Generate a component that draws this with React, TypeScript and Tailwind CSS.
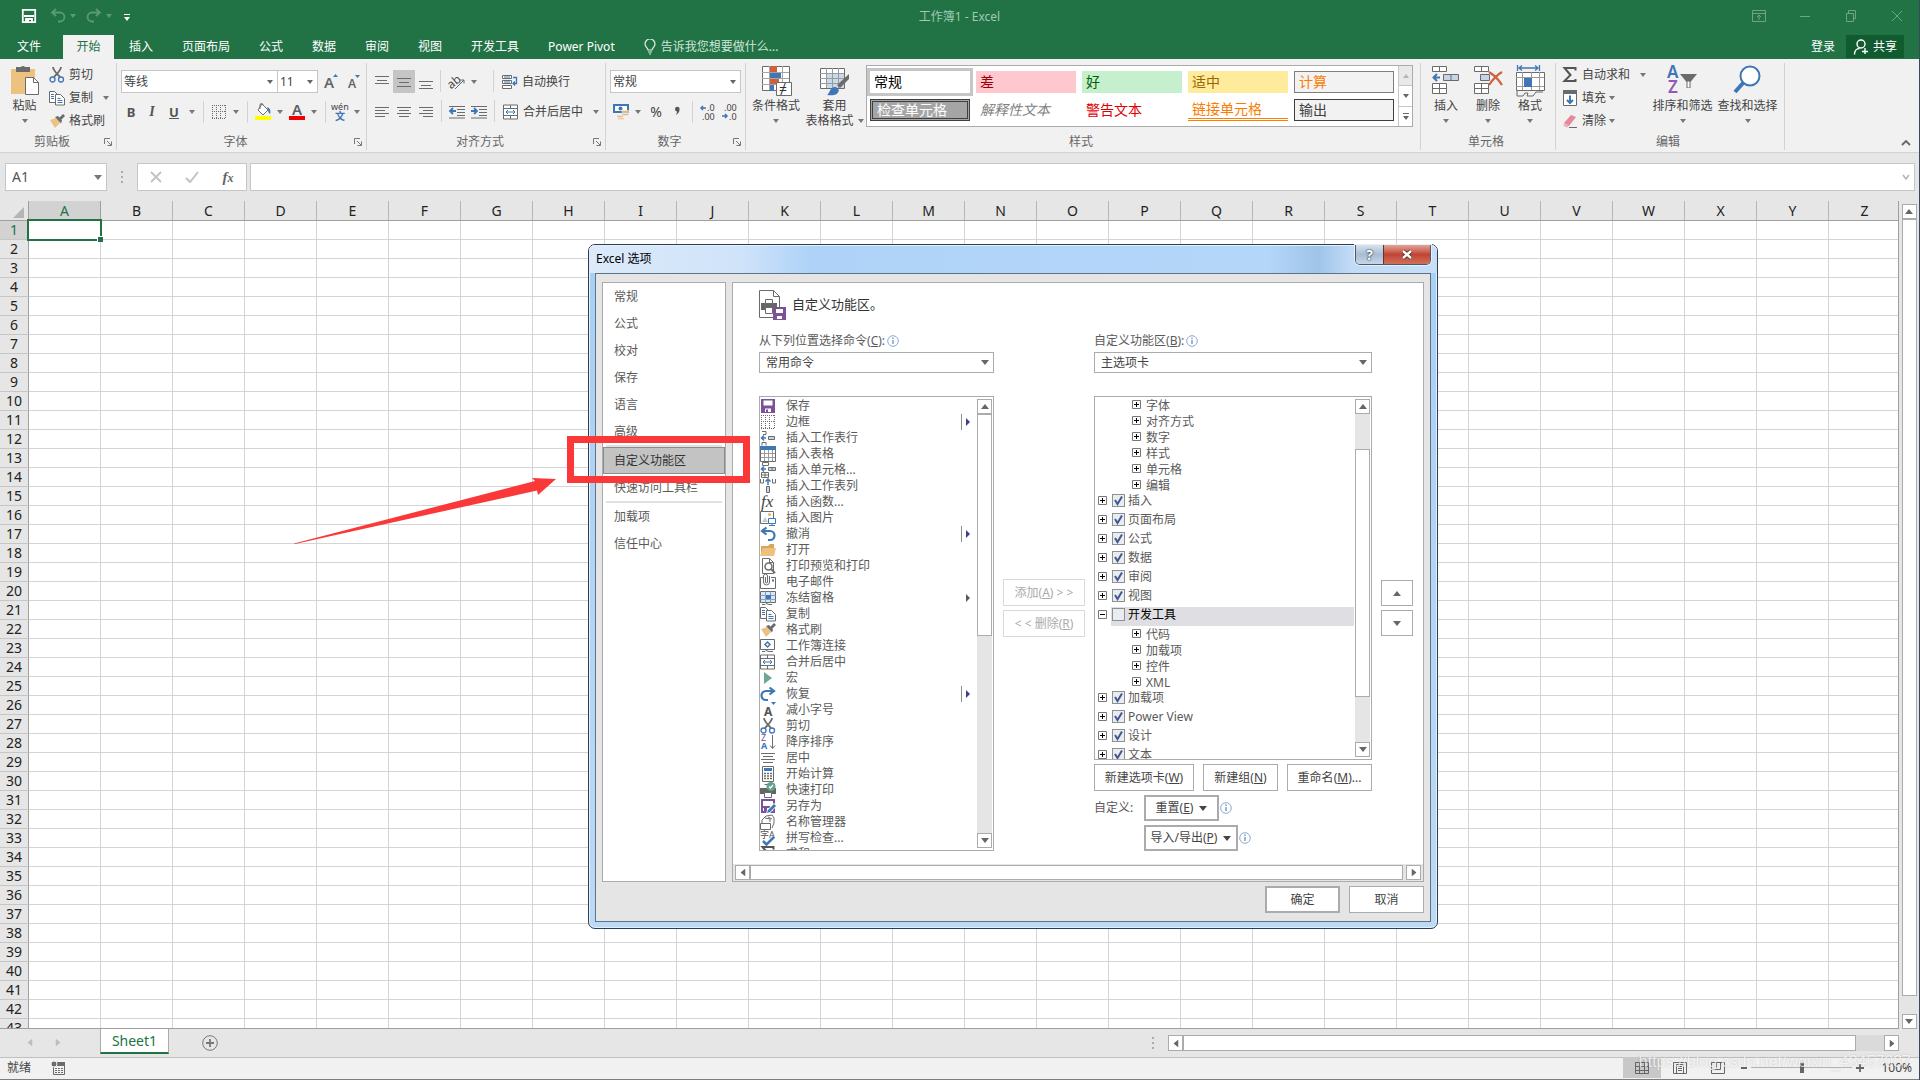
import type { ReactNode } from 'react';

const COLUMNS = 'ABCDEFGHIJKLMNOPQRSTUVWXYZ'.split('');
const ROWS = Array.from({ length: 43 }, (_, i) => i + 1);

const TABS = ['插入', '页面布局', '公式', '数据', '审阅', '视图', '开发工具', 'Power Pivot'];

const GRAY = '#6b6b6b';
const BLUE = '#3f76b5';
const PURPLE = '#7d5199';

/* ---------- icons, all on a 16px grid ---------- */

const ICONS: Record<string, ReactNode> = {
  save: (
    <>
      <path d="M1 1h14v14H1z" fill={PURPLE} />
      <path d="M3.5 2.5h9v5h-9zM5 10.500h6V14H5z" fill="#fff" />
      <path d="M6 11.500h2V14H6z" fill={PURPLE} />
    </>
  ),
  borders: (
    <path d="M1.500 1v14M5.500 1v14M9.500 1v14M14.500 1v14M1 1.500h14M1 7.500h14M1 14.500h14" stroke={GRAY} strokeDasharray="1 1" fill="none" />
  ),
  insertRow: (
    <>
      <path d="M2 1.500h4v3M6 4.500H3M2 12.500h4v3M2 12.500v3" stroke={GRAY} fill="none" />
      <path d="M6 8H2M4 5.500 1.500 8 4 10.500" stroke={BLUE} strokeWidth="1.500" fill="none" />
      <path d="M8.500 6.500h6v3h-6z" fill="#c5d5e6" stroke={GRAY} />
    </>
  ),
  table: (
    <>
      <path d="M.5 3h15v12.500H.5z" fill="#fff" stroke={GRAY} />
      <path d="M0 0h16v4H0z" fill={BLUE} />
      <path d="M4.500 4v11M8.500 4v11M12.500 4v11M1 7.500h14M1 11.500h14" stroke="#9a9a9a" />
    </>
  ),
  insertCells: (
    <>
      <path d="M2.500.5h6v3h-6zM1.500 10.500h7v5h-7zM5 10.500v5M1.500 13h7" fill="none" stroke={GRAY} />
      <path d="M6 7H1.500M4 4.500 1.500 7 4 9.500" stroke={BLUE} strokeWidth="1.500" fill="none" />
      <path d="M8.500 5.500h7v3h-7zM12 5.500v3" fill="#c5d5e6" stroke={GRAY} />
    </>
  ),
  insertCol: (
    <>
      <path d="M.5 1v4h3V1M12.500 1v4h3V1" fill="none" stroke={GRAY} />
      <path d="M8 7V1M5.500 3.500 8 1l2.500 2.500" stroke={BLUE} strokeWidth="1.500" fill="none" />
      <path d="M6.500 8.500h3v6h-3z" fill="#c5d5e6" stroke={GRAY} />
    </>
  ),
  fx: (
    <text x="1" y="13" fontSize="17" fontStyle="italic" fontFamily="Liberation Serif" fill="#444">fx</text>
  ),
  picture: (
    <>
      <path d="M.5 1.500h13v12H.5z" fill="#fff" stroke={GRAY} />
      <path d="M2 12l3-5 3 5z" fill="#b9cde0" />
      <circle cx="9.500" cy="4.500" r="1.500" fill="#e8b46a" />
      <path d="M8.500 8.500h7v5h-7zM12 13.500V16M9 15.500h6" fill="#fff" stroke={BLUE} />
    </>
  ),
  undo: (
    <path d="M6.500 1.500 2 5l4.500 3.500M2.500 5H10a4.200 4.200 0 0 1 0 9H8" fill="none" stroke={BLUE} strokeWidth="2.200" />
  ),
  redo: (
    <path d="M9.500 1.500 14 5 9.500 8.500M13.500 5H6a4.200 4.200 0 0 0 0 9h2" fill="none" stroke={BLUE} strokeWidth="2.200" />
  ),
  open: (
    <>
      <path d="M1 14V4h7l2-2h4v12z" fill="#d9a558" />
      <path d="M0 14 3 6h13l-2 8z" fill="#edc27e" />
    </>
  ),
  preview: (
    <>
      <path d="M2.500.5h7l4 4v11h-11z" fill="#fff" stroke={GRAY} />
      <path d="M9.500.5v4h4" fill="none" stroke={GRAY} />
      <circle cx="8.500" cy="8.500" r="3.500" fill="#fff" stroke={GRAY} strokeWidth="1.500" />
      <path d="m11 11 4 4" stroke={GRAY} strokeWidth="2" />
    </>
  ),
  mail: (
    <>
      <path d="M3 3.500H.5v11h15v-11H11" fill="none" stroke={GRAY} />
      <path d="M12 6.500h2" stroke={BLUE} strokeWidth="2" />
      <path d="M9.500 2v6a3 3 0 0 1-6 0V2a2 2 0 0 1 4 0v6a1 1 0 0 1-2 0V3" fill="none" stroke={GRAY} />
    </>
  ),
  freeze: (
    <>
      <path d="M.5 1.500h15v11H.5z" fill="#dbe7f2" stroke={GRAY} />
      <path d="M5.500 1.500v11M10.500 1.500v11M.5 5.500h15M.5 9.500h15" stroke="#7fa3c7" />
      <path d="M6 5h5v4H6z" fill={BLUE} />
      <path d="M2 14.500h3l1-1 3 1h3" stroke={GRAY} fill="none" />
    </>
  ),
  copy: (
    <>
      <path d="M.5 1.500h5l3 3v8h-8z" fill="#fff" stroke={GRAY} />
      <path d="M6.500 4.500h5l4 4v6.500h-9z" fill="#fff" stroke={GRAY} />
      <path d="M2 4.500h3M2 6.500h3M2 8.500h3M8.500 8.500h3M8.500 10.500h5M8.500 12.500h5" stroke={BLUE} />
    </>
  ),
  brush: (
    <>
      <path d="m1 7 6-2 4 5-5 5z" fill="#ecc183" />
      <path d="m6 4 3-1 4 4.500-1 3z" fill={GRAY} />
      <path d="m10 5 4-4 2 2-4 4z" fill={GRAY} />
    </>
  ),
  connection: (
    <>
      <path d="M.5 1.500h14v10H.5z" fill="#fff" stroke={GRAY} />
      <path d="m7.500 4 2.500 2.500L7.500 9 5 6.500z" fill="none" stroke={BLUE} strokeWidth="1.500" />
      <path d="M2 13.500h3l1-1 3 1h4" stroke={GRAY} fill="none" />
    </>
  ),
  merge: (
    <>
      <path d="M.5 1h14v14H.5zM.5 4.500h14M.5 11.500h14M7.500 1v3.500M7.500 11.500V15" fill="#fff" stroke={GRAY} />
      <path d="M3 8h9M5 6 3 8l2 2M10 6l2 2-2 2" fill="none" stroke={BLUE} />
    </>
  ),
  play: <path d="M4 2v12l8-6z" fill="#6fa893" />,
  shrink: (
    <>
      <text x="4" y="14" fontSize="12" fontWeight="700" fill="#555">A</text>
      <path d="M11 0h5l-2.500 3z" fill={BLUE} />
    </>
  ),
  cut: (
    <>
      <path d="M4 0c0 3 3 6 7 10M12 0c0 3-3 6-7 10" stroke={GRAY} strokeWidth="1.800" fill="none" />
      <circle cx="3.500" cy="12.500" r="2.500" fill="none" stroke={BLUE} strokeWidth="1.300" />
      <circle cx="12" cy="12.500" r="2.500" fill="none" stroke={BLUE} strokeWidth="1.300" />
    </>
  ),
  sortDesc: (
    <>
      <text x="1" y="7" fontSize="9" fill={PURPLE}>Z</text>
      <text x="1" y="15" fontSize="9" fontWeight="700" fill={BLUE}>A</text>
      <path d="M12.500 1v13M10 11.500l2.500 3 2.500-3" fill="none" stroke={GRAY} />
    </>
  ),
  center: <path d="M1 3.500h14M3 6.500h10M1 9.500h14M3 12.500h10" stroke={GRAY} />,
  calc: (
    <>
      <path d="M2.500.5h11v15h-11z" fill="#fff" stroke={GRAY} />
      <path d="M4 2h8v3H4z" fill={BLUE} />
      <path d="M4 7.500h8M4 10h8M4 12.500h8" stroke={GRAY} strokeWidth="1.500" strokeDasharray="2 1" />
    </>
  ),
  quickPrint: (
    <>
      <path d="M0 6h16v6H0z" fill="#666" />
      <path d="M4.500 2.500h7V6M4.500 10.500h7v5h-7z" fill="#fff" stroke={GRAY} />
      <circle cx="11" cy="4.500" r="4.500" fill="#5ea38a" />
      <path d="m9 4.500 1.500 1.500L13 3" fill="none" stroke="#fff" strokeWidth="1.300" />
    </>
  ),
  saveAs: (
    <>
      <path d="M2 2h12v12H2z" fill="#fff" stroke={PURPLE} strokeWidth="2" />
      <path d="M2 8h8v2H2zM4 10h3v4H4z" fill={PURPLE} />
      <path d="m6 16 1-4 7-7 3 3-7 7z" fill="#fff" />
      <path d="m7 15 1-3 6-6 2 2-6 6z" fill={BLUE} />
    </>
  ),
  names: (
    <path d="M.5 9.500h10v6H.5zM2 9V6l4-4 6-1 2 3v5l-2 5M5 4l5 1v3M8 3l4 2" fill="none" stroke={GRAY} />
  ),
  spell: (
    <>
      <text x="0" y="8" fontSize="9" fill="#555">字A</text>
      <path d="m3 11 3.500 3.500L14 7" fill="none" stroke={BLUE} strokeWidth="2.500" />
    </>
  ),
  sum: <path d="M13.500 3.500V1h-11l6 7-6 6h11v-2" fill="none" stroke="#555" strokeWidth="2" />,
  fill: (
    <>
      <path d="M1.500.5h13v15h-13z" fill="#fff" stroke={GRAY} />
      <path d="M1 0h14v4H1z" fill={GRAY} />
      <path d="M8 5.500v7M5 10l3 3 3-3" fill="none" stroke={BLUE} strokeWidth="2" />
    </>
  ),
  eraser: (
    <>
      <path d="m2 10 7-8 5 2-7 9z" fill="#e6899b" />
      <path d="m2 10 5 3-2 1.500-3.500-1.500z" fill="#eab0bc" />
      <path d="M7 14.500h8" stroke={GRAY} />
    </>
  ),
  wrap: (
    <>
      <path d="M.5 1.500h9v3h-9zM.5 6.500h9v3h-9zM.5 11.500h9v3h-9z" fill="#fff" stroke={GRAY} />
      <path d="M2 3h6M2 8h6" stroke={BLUE} />
      <path d="M11 3.500h3.500v6H11M13 7.500l-2 2 2 2" fill="none" stroke={BLUE} strokeWidth="1.300" />
    </>
  ),
  outdent: (
    <>
      <path d="M0 2.500h16M8 5.500h8M8 8.500h8M8 11.500h8M0 14h16" stroke={GRAY} />
      <path d="M7 7H1.500M4 4 1 7l3 3" fill="none" stroke={BLUE} strokeWidth="1.800" />
    </>
  ),
  indent: (
    <>
      <path d="M0 2.500h16M8 5.500h8M8 8.500h8M8 11.500h8M0 14h16" stroke={GRAY} />
      <path d="M0 7h5.500M3 4l3 3-3 3" fill="none" stroke={BLUE} strokeWidth="1.800" />
    </>
  ),
  money: (
    <>
      <path d="M0 0h16v9H0z" fill={BLUE} />
      <path d="M2 2h12v5H2z" fill="#fff" />
      <circle cx="7.500" cy="4.500" r="2" fill={BLUE} />
      <path d="M9 6.500h6.500v2H9zM9 9.500h6.500v2H9zM4 11.500h6v2H4zM5 14h6v1.500H5z" fill="#e8b96f" stroke="#f0f0f0" strokeWidth=".5" />
    </>
  ),
  comma: <path d="M6 5a2.300 2.300 0 0 1 4.600 0c0 3-1.500 5-4 6 1-1.200 1.500-2.300 1.500-3.500C6.800 7.500 6 6.500 6 5z" fill="#555" />,
  bucket: (
    <>
      <path d="m7 0 6 6-5 5-5-5z" fill="#fff" stroke={GRAY} />
      <path d="M5 5V1a1.500 1.500 0 0 1 3 0" fill="none" stroke={GRAY} />
      <path d="M12 3c3 1 4 4 3 7-1-1-2-2-2-4z" fill={BLUE} />
      <path d="M0 12h16v4H0z" fill="#ffff00" />
    </>
  ),
  fontColor: (
    <>
      <text x="3" y="11" fontSize="15" fontWeight="600" fill="#5c5c5c">A</text>
      <path d="M0 12h16v4H0z" fill="#f00000" />
    </>
  ),
  grow: (
    <>
      <text x="0" y="14" fontSize="15" fontWeight="600" fill="#666">A</text>
      <path d="M9 3h5l-2.500-3z" fill={BLUE} />
    </>
  ),
  shrinkFont: (
    <>
      <text x="1" y="14" fontSize="12" fontWeight="600" fill="#666">A</text>
      <path d="M8 1h5l-2.500 3z" fill={BLUE} />
    </>
  ),
  orient: (
    <>
      <text x="-1" y="13" fontSize="12" transform="rotate(-40 4 10)" fill="#444">ab</text>
      <path d="m6 15 9-9M11.500 6H15v3.500" fill="none" stroke={GRAY} />
    </>
  ),
  pinyin: (
    <>
      <text x="-1" y="6" fontSize="9" fill="#444">wén</text>
      <text x="3" y="16" fontSize="10" fontWeight="700" fill={BLUE}>文</text>
    </>
  ),
  moreDecimals: (
    <>
      <path d="M6 4H1M3 2 1 4l2 2" fill="none" stroke={BLUE} strokeWidth="1.500" />
      <text x="7" y="7" fontSize="9" fill="#444">.0</text>
      <text x="2" y="16" fontSize="9" fill="#444">.00</text>
    </>
  ),
  lessDecimals: (
    <>
      <text x="2" y="7" fontSize="9" fill="#444">.00</text>
      <path d="M0 12h5M3 10l2 2-2 2" fill="none" stroke={BLUE} strokeWidth="1.500" />
      <text x="7" y="16" fontSize="9" fill="#444">.0</text>
    </>
  ),
  alignTop: <path d="M1 2.500h14M3 6.500h10M1 9.500h14" stroke={GRAY} />,
  alignMiddle: <path d="M1 4.500h14M3 8.500h10M1 12.500h14" stroke={GRAY} />,
  alignBottom: <path d="M1 7.500h14M3 11.500h10M1 14.500h14" stroke={GRAY} />,
  alignLeft: <path d="M1 3.500h14M1 6.500h10M1 9.500h14M1 12.500h10" stroke={GRAY} />,
  alignCenter: <path d="M1 3.500h14M3 6.500h10M1 9.500h14M3 12.500h10" stroke={GRAY} />,
  alignRight: <path d="M1 3.500h14M5 6.500h10M1 9.500h14M5 12.500h10" stroke={GRAY} />,
};

function Icon({ name }: { name: string }) {
  return (
    <svg viewBox="0 0 16 16" className="size-4 shrink-0 overflow-visible" aria-hidden="true">
      {ICONS[name]}
    </svg>
  );
}

const BIG_ICONS: Record<string, ReactNode> = {
  paste: (
    <>
      <path d="M2 4h24v25H2z" fill="#edc27e" />
      <path d="M7 2h5a2.500 2.500 0 0 1 4 0h5v5H7z" fill={GRAY} />
      <path d="M16.500 12.500h8l5 5v12h-13z" fill="#fff" stroke={GRAY} />
      <path d="M24.500 12.500v5h5" fill="none" stroke={GRAY} />
    </>
  ),
  conditional: (
    <>
      <path d="M1.500 1.500h27v24h-27z" fill="#fff" stroke={GRAY} />
      <path d="M9 1h7v6H9zM9 14h9v6H9z" fill="#d0603c" />
      <path d="M9 8h11v5H9zM9 20h4v6H9z" fill={BLUE} />
      <path d="M8.500 1v24M21.500 1v24M1 7.500h27M1 13.500h27M1 19.500h27" stroke="#a5a5a5" />
      <path d="M15.500 17.500h15v13h-15z" fill="#fff" stroke={GRAY} />
      <text x="18" y="29" fontSize="14" fill="#333">≠</text>
    </>
  ),
  tableStyle: (
    <>
      <path d="M1.500 3.500h24v20h-24z" fill="#fff" stroke={GRAY} />
      <path d="M8 9h17v14H8z" fill="#c9daea" />
      <path d="M7.500 3v20M13.500 3v20M19.500 3v20M1 8.500h24M1 13.500h24M1 18.500h24" stroke="#9a9a9a" />
      <path d="M30 9v5l-9 9-3-3z" fill={GRAY} />
      <path d="M8 30c3-2 3-9 9-8l3 3c-1 5-6 6-12 5z" fill={BLUE} />
    </>
  ),
  insert: (
    <>
      <path d="M1.500 1.500h14v5h-14zM8.500 1.500v5M1.500 18.500h14v10h-14zM8.500 18.500v10M1.500 23.500h14" fill="#fff" stroke={GRAY} />
      <path d="M9 12.500H3M6 9l-3.500 3.500L6 16" fill="none" stroke={BLUE} strokeWidth="2" />
      <path d="M12.500 9.500h15v6h-15zM20 9.500v6" fill="#c5d5e6" stroke={GRAY} />
    </>
  ),
  remove: (
    <>
      <path d="M1.500 1.500h14v5h-14zM8.500 1.500v5M1.500 18.500h14v10h-14zM8.500 18.500v10M1.500 23.500h14" fill="#fff" stroke={GRAY} />
      <path d="M7.500 9.500h9v6h-9z" fill="#c5d5e6" stroke={GRAY} />
      <path d="M16 7q8 5 13 13M29 7q-7 4-13 13" fill="none" stroke="#d0603c" strokeWidth="2.200" />
    </>
  ),
  format: (
    <>
      <path d="M2.500 0v6M24.500 0v6M4 3h19M7 .5 4 3l3 2.500M20 .5 23 3l-3 2.500" fill="none" stroke={BLUE} strokeWidth="1.300" />
      <path d="M1.500 7.500h28v18h-28z" fill="#fff" stroke={GRAY} />
      <path d="M7.500 7v18M16.500 7v18M24.500 7v18M1 12.500h28M1 21.500h28" stroke="#9a9a9a" />
      <path d="M9 13h8v9H9z" fill={BLUE} />
      <path d="M2 26v5h6l2-3h3l-1 3h6l3-4h7" fill="none" stroke={GRAY} />
    </>
  ),
  sort: (
    <>
      <text x="0" y="13" fontSize="17" fontWeight="600" fill={BLUE}>A</text>
      <text x="1" y="28" fontSize="17" fontWeight="600" fill="#9556b5">Z</text>
      <path d="M13 9h17l-6.500 8v6h-4v-6z" fill={GRAY} />
      <path d="M20.500 16.500h2v6h-2z" fill="#fff" />
    </>
  ),
  find: (
    <>
      <path d="m12 17-9 10" stroke={BLUE} strokeWidth="4" />
      <circle cx="18" cy="11" r="9.500" fill="#fff" stroke={BLUE} strokeWidth="2" />
    </>
  ),
};

function Caret({ className = '' }: { className?: string }) {
  return (
    <svg viewBox="0 0 6 4" className={`h-1 w-1.5 shrink-0 ${className}`} aria-hidden="true">
      <path d="M0 0h6L3 4z" fill="currentColor" />
    </svg>
  );
}

function BigCaret({ rotate = '' }: { rotate?: string }) {
  return (
    <svg viewBox="0 0 8 5" className={`h-[5px] w-2 shrink-0 ${rotate}`} aria-hidden="true">
      <path d="M0 0h8L4 5z" fill="currentColor" />
    </svg>
  );
}

function Info() {
  return (
    <svg viewBox="0 0 12 12" className="size-3 shrink-0" aria-hidden="true">
      <circle cx="6" cy="6" r="5.300" fill="#fff" stroke="#8ba9d3" />
      <path d="M6 5v4M6 2.500V4" stroke="#5c83ba" strokeWidth="1.200" />
    </svg>
  );
}

/* ---------- ribbon ---------- */

function Group({ label, width, launcher = false, children }: { label: string; width: string; launcher?: boolean; children: ReactNode }) {
  return (
    <section aria-label={label} className={`mt-1 mb-0.5 flex shrink-0 flex-col border-r border-[#d2d2d2] ${width}`}>
      <div className="flex h-[71px] shrink-0 items-start">{children}</div>
      <div className="flex h-4 shrink-0 items-center pr-1 text-[#666]">
        <span className="flex-1 text-center leading-4">{label}</span>
        {launcher && (
          <button aria-label={`${label}设置`}>
            <svg viewBox="0 0 8 8" className="size-2">
              <path d="M.5 6V.5H6M3 3l4 4M7.500 3.500v4h-4" fill="none" stroke="#777" />
            </svg>
          </button>
        )}
      </div>
    </section>
  );
}

function BigButton({ icon, lines, width }: { icon: string; lines: string[]; width: string }) {
  return (
    <button className={`flex shrink-0 flex-col items-center pt-0.5 ${width}`}>
      <svg viewBox="0 0 31 31" className="size-[31px] overflow-visible" aria-hidden="true">
        {BIG_ICONS[icon]}
      </svg>
      <span className="mt-0.5 leading-[15px] whitespace-nowrap">{lines[0]}</span>
      {lines[1] ? (
        <span className="flex items-center gap-1 leading-[15px] whitespace-nowrap">
          {lines[1]}
          <Caret className="text-[#777]" />
        </span>
      ) : (
        <Caret className="mt-[6px] text-[#777]" />
      )}
    </button>
  );
}

function SmallButton({ icon, label, caret = '' }: { icon: string; label: string; caret?: string }) {
  return (
    <button className="flex h-[23px] items-center gap-1 whitespace-nowrap">
      <Icon name={icon} />
      {label}
      {caret && <Caret className={`text-[#777] ${caret}`} />}
    </button>
  );
}

function Tool({ icon, width = 'w-[22px]', active = false }: { icon: string; width?: string; active?: boolean }) {
  return (
    <button aria-label={icon} className={`flex h-[23px] shrink-0 items-center justify-center ${width} ${active ? 'bg-[#c5c5c5]' : ''}`}>
      <Icon name={icon} />
    </button>
  );
}

function DropTool({ icon, width }: { icon: string; width: string }) {
  return (
    <button aria-label={icon} className={`flex h-[23px] shrink-0 items-center gap-[6px] text-[#777] ${width}`}>
      <Icon name={icon} />
      <Caret />
    </button>
  );
}

function Sep({ className = '' }: { className?: string }) {
  return <span className={`h-[22px] w-px shrink-0 bg-[#d2d2d2] ${className}`} />;
}

function Combo({ label, value, width, size = 'h-[23px]', pad = 'pl-0.5', big = false }: { label: string; value: string; width: string; size?: string; pad?: string; big?: boolean }) {
  return (
    <span className={`grid shrink-0 items-center border bg-white ${big ? 'border-[#ababab]' : 'border-[#c6c6c6]'} ${size} ${width}`}>
      <select aria-label={label} defaultValue={value} className={`h-full w-full appearance-none bg-transparent text-[#444] outline-none [grid-area:1/1] ${pad}`}>
        <option>{value}</option>
      </select>
      <span className="pointer-events-none mr-1 justify-self-end text-[#666] [grid-area:1/1]">{big ? <BigCaret /> : <Caret />}</span>
    </span>
  );
}

function CellStyles() {
  const cell = 'flex h-[22px] items-center pl-1 text-[14px] leading-4 whitespace-nowrap';
  return (
    <div className="mt-0.5 flex h-[62px] border border-[#ababab] bg-white">
      <div className="grid grid-cols-[repeat(5,100px)] content-start gap-x-1.5 gap-y-1.5 pt-[5px] pr-1 pl-[3px]">
        <button className={`${cell} text-black outline-3 outline-[#c6c6c6]`}>常规</button>
        <button className={`${cell} bg-[#ffc7ce] text-[#9c0006]`}>差</button>
        <button className={`${cell} bg-[#c6efce] text-[#006100]`}>好</button>
        <button className={`${cell} bg-[#ffeb9c] text-[#9c6500]`}>适中</button>
        <button className={`${cell} border border-[#7f7f7f] bg-[#f2f2f2] text-[#fa7d00]`}>计算</button>
        <button className={`${cell} border-3 border-double border-[#3f3f3f] bg-[#a5a5a5] text-white`}>检查单元格</button>
        <button className={`${cell} text-[#7f7f7f] italic`}>解释性文本</button>
        <button className={`${cell} text-[#e00000]`}>警告文本</button>
        <button className={`${cell} border-b-3 border-double border-[#ff8001] text-[#fa7d00]`}>链接单元格</button>
        <button className={`${cell} border border-[#3f3f3f] bg-[#f2f2f2] text-[#3f3f3f]`}>输出</button>
      </div>
      <div className="flex w-[14px] flex-col divide-y divide-[#c6c6c6] border-l border-[#c6c6c6] text-[#666]">
        <button aria-label="上一行" className="flex flex-1 items-center justify-center bg-[#e9e9e9] text-[#b5b5b5]"><Caret className="rotate-180" /></button>
        <button aria-label="下一行" className="flex flex-1 items-center justify-center"><Caret /></button>
        <button aria-label="其他" className="flex flex-1 flex-col items-center justify-center gap-0.5">
          <span className="h-px w-1.5 bg-[#666]" />
          <Caret />
        </button>
      </div>
    </div>
  );
}

function TitleBar() {
  return (
    <header className="bg-[#217346] text-white">
      <div className="grid h-[35px] grid-cols-[1fr_auto_1fr] items-center pb-0.5">
        <div className="flex items-center pb-0.5 pl-[21px]">
          <button aria-label="保存" className="mr-[13px]">
            <svg viewBox="0 0 16 16" className="size-4">
              <path d="M1.800 1.800h12.400v12.400H1.800zM3 8h10M5 14v-3h6v3" fill="none" stroke="#fff" strokeWidth="1.800" />
              <path d="M6 12h2v2H6z" fill="#fff" />
            </svg>
          </button>
          <button aria-label="撤消" className="mr-[10px] flex items-center gap-1 text-[#5b9876]">
            <svg viewBox="0 0 16 16" className="size-4">
              <path d="M6 1 2 4.500 6 8M2.500 4.500H10a4.500 4.500 0 0 1 0 9H8" fill="none" stroke="currentColor" strokeWidth="1.800" />
            </svg>
            <Caret />
          </button>
          <button aria-label="恢复" className="mr-3 flex items-center gap-1 text-[#5b9876]">
            <svg viewBox="0 0 16 16" className="size-4">
              <path d="M10 1l4 3.500L10 8M13.500 4.500H6a4.500 4.500 0 0 0 0 9h2" fill="none" stroke="currentColor" strokeWidth="1.800" />
            </svg>
            <Caret />
          </button>
          <button aria-label="自定义快速访问工具栏" className="flex flex-col items-center gap-0.5 pt-1">
            <span className="h-px w-1.5 bg-white" />
            <Caret />
          </button>
        </div>
        <h1 className="text-[#9fcab2]">工作簿1 - Excel</h1>
        <div className="flex items-center justify-end gap-8 pr-[15px] pb-0.5 text-[#6da585]">
          <button aria-label="功能区显示选项">
            <svg viewBox="0 0 14 14" className="size-[14px]"><path d="M.5 1.500h13v11H.5zM.5 4.500h13M7 11V6M5 8l2-2 2 2" fill="none" stroke="currentColor" /></svg>
          </button>
          <button aria-label="最小化">
            <svg viewBox="0 0 14 14" className="size-[14px]"><path d="M2 7.500h10" stroke="currentColor" /></svg>
          </button>
          <button aria-label="还原">
            <svg viewBox="0 0 14 14" className="size-[14px]"><path d="M2.500 4.500h7v8h-7zM4.500 4.500v-3h7v8h-2" fill="none" stroke="currentColor" /></svg>
          </button>
          <button aria-label="关闭">
            <svg viewBox="0 0 14 14" className="size-[14px]"><path d="m2 2 10 10M12 2 2 12" stroke="currentColor" /></svg>
          </button>
        </div>
      </div>
      <nav className="flex h-6 gap-px">
        <a href="#file" className="flex w-[62px] items-center pl-[17px]">文件</a>
        <a href="#home" className="flex w-[51px] items-center justify-center bg-[#f1f1f1] text-[#217346]">开始</a>
        {TABS.map((tab) => (
          <a key={tab} href={`#${tab}`} className="flex items-center px-3.5 whitespace-nowrap">{tab}</a>
        ))}
        <label className="flex flex-1 items-center gap-[5px] pl-3.5">
          <svg viewBox="0 0 12 16" className="h-4 w-3">
            <path d="M4 11c0-2-3-3-3-6a5 5 0 0 1 10 0c0 3-3 4-3 6zM4 13h4M5 15h2" fill="none" stroke="#e0efe6" strokeWidth="1.200" />
          </svg>
          <input aria-label="操作说明搜索" placeholder="告诉我您想要做什么..." className="w-40 bg-transparent outline-none placeholder:text-[#cfe5d8]" />
        </label>
        <button className="px-2.5">登录</button>
        <button className="mr-[15px] flex h-[23px] items-center gap-1 bg-[#115b31] px-[7px]">
          <svg viewBox="0 0 16 16" className="size-4">
            <circle cx="8" cy="5" r="4" fill="none" stroke="#fff" strokeWidth="1.400" />
            <path d="M1.500 15.500c0-4 2.500-6 5-6M12 9v6M9 12.500h6" fill="none" stroke="#fff" strokeWidth="1.400" />
          </svg>
          共享
        </button>
      </nav>
    </header>
  );
}

function Ribbon() {
  return (
    <div className="flex h-[94px] overflow-hidden border-b border-[#d2d2d2] bg-[#f1f1f1] text-[#444]">
      <Group label="剪贴板" width="w-[117px]" launcher>
        <BigButton icon="paste" lines={['粘贴']} width="w-[49px]" />
        <div className="flex flex-col">
          <SmallButton icon="cut" label="剪切" />
          <SmallButton icon="copy" label="复制" caret="ml-1.5" />
          <SmallButton icon="brush" label="格式刷" />
        </div>
      </Group>

      <Group label="字体" width="w-[250px]" launcher>
        <div className="flex flex-col gap-[7px] pt-[7px] pl-1">
          <div className="flex">
            <Combo label="字体名称" value="等线" width="w-[157px]" />
            <Combo label="字号" value="11" width="-ml-px w-[41px]" />
            <div className="ml-0.5 flex">
              <Tool icon="grow" width="w-6" />
              <Tool icon="shrinkFont" width="w-[22px]" />
            </div>
          </div>
          <div className="flex h-[23px] items-center text-[#555]">
            <button className="w-5 text-[13px] font-bold">B</button>
            <button className="w-[22px] font-[Liberation_Serif] text-[14px] font-bold italic">I</button>
            <button className="w-[22px] text-[13px] font-bold underline">U</button>
            <Caret className="mr-2 ml-1 text-[#777]" />
            <Sep className="mr-[7px]" />
            <DropTool icon="borders" width="w-9" />
            <Sep className="mr-[7px]" />
            <DropTool icon="bucket" width="w-[34px]" />
            <DropTool icon="fontColor" width="w-9" />
            <Sep className="mr-1.5" />
            <DropTool icon="pinyin" width="w-7" />
          </div>
        </div>
      </Group>

      <Group label="对齐方式" width="w-[239px]" launcher>
        <div className="flex flex-col gap-[7px] pt-[7px] pl-1">
          <div className="flex">
            <Tool icon="alignTop" />
            <Tool icon="alignMiddle" active />
            <Tool icon="alignBottom" />
            <Sep className="mr-2 ml-[3px]" />
            <DropTool icon="orient" width="w-[44px]" />
            <Sep className="mr-2" />
            <SmallButton icon="wrap" label="自动换行" />
          </div>
          <div className="flex">
            <Tool icon="alignLeft" />
            <Tool icon="alignCenter" />
            <Tool icon="alignRight" />
            <Sep className="mr-1 ml-1" />
            <Tool icon="outdent" />
            <Tool icon="indent" />
            <Sep className="mr-2 ml-1" />
            <SmallButton icon="merge" label="合并后居中" caret="ml-1.5" />
          </div>
        </div>
      </Group>

      <Group label="数字" width="w-[140px]" launcher>
        <div className="flex flex-col gap-[7px] pt-[7px] pl-1">
          <Combo label="数字格式" value="常规" width="w-[131px]" />
          <div className="flex h-[23px] items-center pl-[3px]">
            <DropTool icon="money" width="w-[33px]" />
            <button className="w-5 text-[14px]">%</button>
            <Tool icon="comma" />
            <Sep className="mr-1 ml-1" />
            <Tool icon="moreDecimals" />
            <Tool icon="lessDecimals" />
          </div>
        </div>
      </Group>

      <Group label="样式" width="w-[675px]">
        <BigButton icon="conditional" lines={['条件格式']} width="ml-[3px] w-[54px]" />
        <BigButton icon="tableStyle" lines={['套用', '表格格式']} width="w-[63px]" />
        <CellStyles />
      </Group>

      <Group label="单元格" width="w-[135px]">
        <BigButton icon="insert" lines={['插入']} width="ml-1 w-[42px]" />
        <BigButton icon="remove" lines={['删除']} width="w-[42px]" />
        <BigButton icon="format" lines={['格式']} width="w-[42px]" />
      </Group>

      <Group label="编辑" width="w-[229px]">
        <div className="flex w-[94px] flex-col pl-[6px]">
          <SmallButton icon="sum" label="自动求和" caret="ml-1.5" />
          <SmallButton icon="fill" label="填充" caret="-ml-px" />
          <SmallButton icon="eraser" label="清除" caret="-ml-px" />
        </div>
        <BigButton icon="sort" lines={['排序和筛选']} width="w-[65px]" />
        <BigButton icon="find" lines={['查找和选择']} width="w-[65px]" />
      </Group>

      <div className="flex flex-1 items-end justify-end pr-2 pb-1">
        <button aria-label="折叠功能区">
          <svg viewBox="0 0 10 10" className="size-[10px]"><path d="m1 7 4-4 4 4" fill="none" stroke="#666" strokeWidth="1.800" /></svg>
        </button>
      </div>
    </div>
  );
}

function Grip() {
  return (
    <span className="flex flex-col gap-[3px]">
      <span className="size-0.5 bg-[#ababab]" />
      <span className="size-0.5 bg-[#ababab]" />
      <span className="size-0.5 bg-[#ababab]" />
    </span>
  );
}

function FormulaBar() {
  return (
    <div className="flex h-12 items-start pt-[10px] pr-1 pl-[5px]">
      <div className="flex h-7 w-[102px] items-center border border-[#c6c6c6] bg-white pr-1">
        <input aria-label="名称框" defaultValue="A1" className="w-full min-w-0 bg-transparent pl-1.5 text-[14px] text-[#555] outline-none" />
        <span className="text-[#777]"><BigCaret /></span>
      </div>
      <div className="flex h-7 w-[30px] items-center justify-center"><Grip /></div>
      <div className="grid h-7 w-[110px] grid-cols-3 items-center justify-items-center border border-[#c6c6c6] bg-white">
        <button aria-label="取消">
          <svg viewBox="0 0 12 12" className="size-3"><path d="m1 1 10 10M11 1 1 11" stroke="#c2c2c2" strokeWidth="1.800" /></svg>
        </button>
        <button aria-label="输入">
          <svg viewBox="0 0 14 12" className="h-3 w-3.5"><path d="m1 7 4 4 8-10" fill="none" stroke="#c2c2c2" strokeWidth="2" /></svg>
        </button>
        <button aria-label="插入函数" className="font-[Liberation_Serif] text-[15px] leading-4 font-bold text-[#666] italic">
          f<span className="text-[12px]">x</span>
        </button>
      </div>
      <div className="ml-[3px] flex h-7 flex-1 items-center border border-[#c6c6c6] bg-white pr-1">
        <input aria-label="编辑栏" className="w-full bg-transparent px-1 outline-none" />
        <svg viewBox="0 0 8 8" className="size-2"><path d="m1 2 3 4 3-4" fill="none" stroke="#b5b5b5" strokeWidth="1.600" /></svg>
      </div>
    </div>
  );
}

/* ---------- scroll bars ---------- */

function ScrollButton({ label, rotate = '', className = 'size-[15px]' }: { label: string; rotate?: string; className?: string }) {
  return (
    <button aria-label={label} className={`flex shrink-0 items-center justify-center border border-[#ababab] bg-white text-[#666] ${className}`}>
      <BigCaret rotate={rotate} />
    </button>
  );
}

function VScroll({ before = '', thumb }: { before?: string; thumb: string }) {
  return (
    <div className="flex w-[15px] shrink-0 flex-col bg-[#e5e5e5]">
      <ScrollButton label="向上滚动" rotate="rotate-180" />
      <span className={before} />
      <span className={`border border-[#ababab] bg-white ${thumb}`} />
      <span className="flex-1" />
      <ScrollButton label="向下滚动" />
    </div>
  );
}

/* ---------- sheet ---------- */

function Sheet() {
  return (
    <div className="flex min-h-0 flex-1">
      <div className="min-w-0 flex-1 overflow-hidden border-r border-b border-[#9f9f9f] bg-white">
        <table className="w-[1901px] table-fixed border-separate border-spacing-0 text-center text-[14px] leading-[18px]">
          <thead>
            <tr className="h-5 bg-[#e6e6e6] text-[#222]">
              <th className="w-[29px] border-r border-b border-[#9f9f9f] p-0" aria-label="全选">
                <svg viewBox="0 0 11 11" className="mt-1 mr-1 ml-auto size-[11px]"><path d="M11 0v11H0z" fill="#b5b5b5" /></svg>
              </th>
              {COLUMNS.map((col) => (
                <th key={col} scope="col" className={`border-r border-b border-[#9f9f9f] p-0 font-normal ${col === 'A' ? 'bg-[#d2d2d2] text-[#217346]' : 'border-r-[#b5b5b5]'}`}>
                  {col}
                </th>
              ))}
            </tr>
          </thead>
          <tbody>
            {ROWS.map((row) => (
              <tr key={row} className="h-[19px]">
                <th scope="row" className={`border-r border-b border-r-[#9f9f9f] border-b-[#c6c6c6] p-0 font-normal ${row === 1 ? 'bg-[#d2d2d2] text-[#217346]' : 'bg-[#e6e6e6] text-[#222]'}`}>
                  {row}
                </th>
                {COLUMNS.map((col) => (
                  <td key={col} className="border-r border-b border-[#d4d4d4] p-0">
                    {row === 1 && col === 'A' && (
                      <div className="relative h-[18px] outline-2 outline-[#217346]">
                        <span className="absolute -right-[3px] -bottom-[3px] size-[6px] border-t border-l border-white bg-[#217346]" />
                      </div>
                    )}
                  </td>
                ))}
              </tr>
            ))}
          </tbody>
        </table>
      </div>
      <div className="flex w-5 justify-center pt-[3px]">
        <VScroll thumb="h-[777px]" />
      </div>
    </div>
  );
}

function SheetTabs() {
  return (
    <div className="flex h-7 items-start pr-5">
      <div className="flex h-[26px] w-[100px] items-center gap-5 pl-[26px] text-[#bdbdbd]">
        <button aria-label="上一个工作表"><BigCaret rotate="rotate-90" /></button>
        <button aria-label="下一个工作表"><BigCaret rotate="-rotate-90" /></button>
      </div>
      <button className="h-[25px] w-[69px] border-x border-b-2 border-x-[#ababab] border-b-[#217346] bg-white text-[14px] text-[#217346]">Sheet1</button>
      <button aria-label="新工作表" className="mt-[6px] ml-[33px]">
        <svg viewBox="0 0 16 16" className="size-4">
          <circle cx="8" cy="8" r="7.300" fill="none" stroke="#777" />
          <path d="M8 4v8M4 8h8" stroke="#777" strokeWidth="1.800" />
        </svg>
      </button>
      <div className="ml-auto flex w-[747px] items-center pt-[6px]">
        <Grip />
        <ScrollButton label="向左滚动" rotate="rotate-90" className="ml-[14px] h-4 w-[15px]" />
        <span className="h-4 w-[673px] border border-[#ababab] bg-white" />
        <span className="h-4 w-7 bg-[#dadada]" />
        <ScrollButton label="向右滚动" rotate="-rotate-90" className="h-4 w-[15px]" />
      </div>
    </div>
  );
}

function StatusBar() {
  return (
    <footer className="relative flex h-[23px] items-center border-t border-b border-t-[#c0c0c0] border-b-[#7d7d7d] bg-[#f1f1f1] pb-0.5 pl-[7px] text-[#444]">
      <span>就绪</span>
      <svg viewBox="0 0 14 14" className="ml-5 size-[14px]">
        <path d="M2.500 3.500h11v10h-11z" fill="none" stroke={GRAY} />
        <path d="M4 7.500h8M4 9.500h8M4 11.500h8" stroke={GRAY} strokeDasharray="2 1" />
        <path d="M6 1h8v4H6z" fill={GRAY} />
        <circle cx="3" cy="3" r="3" fill={GRAY} stroke="#f1f1f1" />
      </svg>
      <div className="ml-auto flex items-center">
        <button aria-label="普通" className="flex h-[21px] w-[38px] items-center justify-center bg-[#c8c8c8]">
          <svg viewBox="0 0 14 14" className="size-[14px]"><path d="M.5 1.500h13v11H.5zM4.500 1.500v11M9.500 1.500v11M.5 5.500h13M.5 9.500h13" fill="none" stroke="#666" /></svg>
        </button>
        <button aria-label="页面布局" className="flex h-[21px] w-[38px] items-center justify-center">
          <svg viewBox="0 0 14 14" className="size-[14px]"><path d="M.5 1.500h13v11H.5zM3.500 3.500h7v9h-7zM5 5.500h4M5 7.500h4M5 9.500h4" fill="none" stroke="#666" /></svg>
        </button>
        <button aria-label="分页预览" className="flex h-[21px] w-[38px] items-center justify-center">
          <svg viewBox="0 0 14 14" className="size-[14px]"><path d="M.5 1.500h13v11H.5zM.5 8.500h9v-7M5.500 1.500v5" fill="none" stroke="#666" /></svg>
        </button>
        <button aria-label="缩小" className="ml-1 h-0.5 w-1.5 bg-[#666]" />
        <input
          type="range"
          aria-label="缩放"
          defaultValue={50}
          className="mx-1 h-3 w-[101px] appearance-none bg-[linear-gradient(#b5b5b5,#b5b5b5)] bg-[size:100%_1px] bg-center bg-no-repeat [&::-webkit-slider-thumb]:h-[11px] [&::-webkit-slider-thumb]:w-1 [&::-webkit-slider-thumb]:appearance-none [&::-webkit-slider-thumb]:bg-[#666]"
        />
        <button aria-label="放大">
          <svg viewBox="0 0 8 8" className="size-2"><path d="M4 0v8M0 4h8" stroke="#666" strokeWidth="1.800" /></svg>
        </button>
        <span className="mr-[7px] w-12 text-right">100%</span>
      </div>
      <span className="pointer-events-none absolute -top-1.5 right-2 font-[Liberation_Sans] text-[16px] leading-5 whitespace-nowrap text-white/75 [text-shadow:0_0_2px_#00000033]">
        https://blog.csdn.net/weixin_43457037
      </span>
    </footer>
  );
}

/* ---------- options dialog ---------- */

const COMMANDS: [string, string, string?][] = [
  ['save', '保存'],
  ['borders', '边框', 'split'],
  ['insertRow', '插入工作表行'],
  ['table', '插入表格'],
  ['insertCells', '插入单元格...'],
  ['insertCol', '插入工作表列'],
  ['fx', '插入函数...'],
  ['picture', '插入图片'],
  ['undo', '撤消', 'split'],
  ['open', '打开'],
  ['preview', '打印预览和打印'],
  ['mail', '电子邮件'],
  ['freeze', '冻结窗格', 'menu'],
  ['copy', '复制'],
  ['brush', '格式刷'],
  ['connection', '工作簿连接'],
  ['merge', '合并后居中'],
  ['play', '宏'],
  ['redo', '恢复', 'split'],
  ['shrink', '减小字号'],
  ['cut', '剪切'],
  ['sortDesc', '降序排序'],
  ['center', '居中'],
  ['calc', '开始计算'],
  ['quickPrint', '快速打印'],
  ['saveAs', '另存为'],
  ['names', '名称管理器'],
  ['spell', '拼写检查...'],
  ['sum', '求和'],
];

type TreeNode = { label: string; child?: boolean; off?: boolean };

const TREE: TreeNode[] = [
  { label: '字体', child: true },
  { label: '对齐方式', child: true },
  { label: '数字', child: true },
  { label: '样式', child: true },
  { label: '单元格', child: true },
  { label: '编辑', child: true },
  { label: '插入' },
  { label: '页面布局' },
  { label: '公式' },
  { label: '数据' },
  { label: '审阅' },
  { label: '视图' },
  { label: '开发工具', off: true },
  { label: '代码', child: true },
  { label: '加载项', child: true },
  { label: '控件', child: true },
  { label: 'XML', child: true },
  { label: '加载项' },
  { label: 'Power View' },
  { label: '设计' },
  { label: '文本' },
];

function Expander({ open = false }: { open?: boolean }) {
  return (
    <button aria-label={open ? '折叠' : '展开'} className="block size-[9px] shrink-0">
      <svg viewBox="0 0 9 9" className="block size-[9px]">
        <path d="M.5.5h8v8h-8z" fill="#fff" stroke="#777" />
        <path d={open ? 'M2 4.500h5' : 'M2 4.500h5M4.500 2v5'} stroke="#000" />
      </svg>
    </button>
  );
}

function TreeRow({ node }: { node: TreeNode }) {
  if (node.child) {
    return (
      <li className="flex h-4 items-start gap-[5px] pl-[37px]">
        <span className="pt-[3px]"><Expander /></span>
        <span className="pt-px leading-4">{node.label}</span>
      </li>
    );
  }
  return (
    <li className="flex h-[19px] pl-[3px]">
      <span className="flex w-[13px] items-center pb-1"><Expander open={node.off} /></span>
      <label className={`flex flex-1 items-center gap-[3px] pb-1 pl-px ${node.off ? 'bg-[#dfdfe3] text-black' : ''}`}>
        <span className="grid size-[13px]">
          <input type="checkbox" defaultChecked={!node.off} className="peer size-[13px] appearance-none border border-[#8e8f8f] bg-[#e9ecf0] [grid-area:1/1]" />
          <svg viewBox="0 0 13 13" className="pointer-events-none invisible size-[13px] peer-checked:visible [grid-area:1/1]">
            <path d="m3 6 2.500 4L10 2.500" fill="none" stroke="#44588f" strokeWidth="2" />
          </svg>
        </span>
        {node.label}
      </label>
    </li>
  );
}

function Key({ children }: { children: string }) {
  return <span>(<u>{children}</u>)</span>;
}

const NAV_ITEMS = ['常规', '公式', '校对', '保存', '语言', '高级', '-', '自定义功能区', '快速访问工具栏', '-', '加载项', '信任中心'];

function OptionsDialog() {
  const push = 'flex h-[27px] shrink-0 items-center justify-center border-[#ababab] bg-white text-[#444] whitespace-nowrap';
  return (
    <div
      role="dialog"
      aria-label="Excel 选项"
      className="absolute top-[244px] left-[588px] w-[850px] rounded-[7px] border border-[#2d3e50] bg-linear-to-b from-[#a9cff5] to-[#bcd9f5] text-[#5a5a5a] shadow-[inset_0_0_0_1px_#e4f1fd]"
    >
      <div className="flex h-7 items-start justify-between rounded-t-[6px] bg-[linear-gradient(to_right,#dceafa_0%,#cfe3f9_18%,#afd3f8_26%,#b4d6f9_80%,#9fc4e8_86%,#c3dcf6_90%,#c6def6_100%)] pr-1.5 pl-[7px] shadow-[inset_0_1px_0_#e4f1fd]">
        <h2 className="pt-1.5 text-[12px] text-black">Excel 选项</h2>
        <div className="flex h-5 overflow-hidden rounded-b-[5px] border border-t-0 border-[#4d5a6b] shadow-[0_0_0_1px_#e4f1fd]">
          <button className="w-[27px] bg-linear-to-b from-[#d6e2ee] via-[#a8bdd3] via-50% to-[#c5d8ea] text-[14px] leading-5 font-bold text-white [text-shadow:0_0_2px_#222,0_0_1px_#222]">?</button>
          <button aria-label="关闭" className="flex w-[47px] items-center justify-center border-l border-[#6b2f2a] bg-linear-to-b from-[#e3a396] via-[#c04434] via-50% to-[#d0705a]">
            <svg viewBox="0 0 12 11" className="h-[11px] w-3">
              <path d="m2 2 8 7M10 2 2 9" stroke="#4a2a2a" strokeWidth="4" />
              <path d="m2 2 8 7M10 2 2 9" stroke="#fff" strokeWidth="2.400" />
            </svg>
          </button>
        </div>
      </div>

      <div className="mx-1.5 mb-1.5 border border-[#5f7386] bg-[#e5e5e5] px-1.5 pt-2">
        <div className="flex gap-1.5">
          <ul className="w-[124px] shrink-0 border border-[#ababab] bg-white">
            {NAV_ITEMS.map((item, i) =>
              item === '-' ? (
                <li key={i} className="mx-[3px] h-0.5 bg-[#e1e1e1]" />
              ) : (
                <li key={i}>
                  <button className={`flex h-[27px] w-full items-center pl-[11px] whitespace-nowrap ${item === '自定义功能区' ? 'bg-[#c3c3c3] text-[#333] outline -outline-offset-1 outline-[#8c8c8c]' : ''}`}>
                    {item}
                  </button>
                </li>
              ),
            )}
          </ul>

          <div className="flex min-w-0 flex-1 flex-col border border-[#ababab] bg-white">
            <div className="flex flex-1 flex-col pt-[7px] pl-[26px]">
              <div className="flex h-[30px] items-center gap-1.5 text-[13px] text-[#333]">
                <svg viewBox="0 0 27 30" className="h-[30px] w-[27px]">
                  <path d="M.5.5h14l6 6v21H.5z" fill="#fff" stroke={GRAY} />
                  <path d="M14.500.5v6h6" fill="none" stroke={GRAY} />
                  <path d="M2 13h16v7H2z" fill="#666" />
                  <path d="M6.500 9.500h7v4h-7zM6.500 17.500h7v6h-7z" fill="#fff" stroke={GRAY} />
                  <path d="M14 17h13v13H14z" fill={PURPLE} />
                  <path d="M17 19h7v4h-7zM18 26h5v3h-5z" fill="#fff" />
                </svg>
                <span className="pb-0.5">自定义功能区。</span>
              </div>

              <div className="mt-3 flex items-start">
                <div className="flex w-[235px] flex-col">
                  <div className="flex h-5 items-center gap-0.5 pb-0.5">
                    <span>从下列位置选择命令<Key>C</Key>:</span>
                    <Info />
                  </div>
                  <Combo label="从下列位置选择命令" value="常用命令" width="w-full" size="h-[21px]" pad="pl-1.5" big />
                  <div className="mt-[23px] flex h-[455px] border border-[#ababab] pr-px">
                    <ul className="min-w-0 flex-1 overflow-hidden pt-px">
                      {COMMANDS.map(([icon, label, sub]) => (
                        <li key={label} className="flex h-4 items-center gap-[10px] pr-[7px]">
                          <Icon name={icon} />
                          <span className="flex-1 leading-4">{label}</span>
                          {sub && (
                            <span className={`flex h-4 items-center pl-1 ${sub === 'split' ? 'border-l border-[#8c8c8c] text-[#3b3f8f]' : ''}`}>
                              <svg viewBox="0 0 4 8" className="h-2 w-1"><path d="M0 0v8l4-4z" fill="currentColor" /></svg>
                            </span>
                          )}
                        </li>
                      ))}
                    </ul>
                    <div className="flex py-0.5"><VScroll thumb="h-[222px]" /></div>
                  </div>
                </div>

                <div className="mx-[9px] flex w-[82px] flex-col gap-1 pt-[247px]">
                  <button disabled className="h-[27px] border border-[#d9d9d9] text-[#ababab]">添加<Key>A</Key> &gt; &gt;</button>
                  <button disabled className="h-[27px] border border-[#d9d9d9] text-[#ababab]">&lt; &lt; 删除<Key>R</Key></button>
                </div>

                <div className="flex w-[278px] flex-col">
                  <div className="flex h-5 items-center gap-0.5 pb-0.5">
                    <span>自定义功能区<Key>B</Key>:</span>
                    <Info />
                  </div>
                  <Combo label="自定义功能区" value="主选项卡" width="w-full" size="h-[21px]" pad="pl-1.5" big />
                  <div className="mt-[23px] flex h-[364px] border border-[#ababab] pr-px">
                    <ul className="min-w-0 flex-1 overflow-hidden pr-px">
                      {TREE.map((node, i) => (
                        <TreeRow key={i} node={node} />
                      ))}
                    </ul>
                    <div className="flex py-0.5"><VScroll before="h-[35px]" thumb="h-[248px]" /></div>
                  </div>
                  <div className="mt-1 flex justify-between">
                    <button className={`${push} w-[100px] border`}>新建选项卡<Key>W</Key></button>
                    <button className={`${push} w-[75px] border`}>新建组<Key>N</Key></button>
                    <button className={`${push} w-[85px] border`}>重命名<Key>M</Key>...</button>
                  </div>
                  <div className="mt-1 grid grid-cols-[50px_auto] gap-y-1">
                    <span className="flex items-center">自定义:</span>
                    <div className="flex items-center gap-px">
                      <button className="flex h-[26px] w-[75px] items-center justify-center gap-1.5 border-2 border-[#ababab] text-[#444]">
                        <span>重置<Key>E</Key></span>
                        <BigCaret />
                      </button>
                      <Info />
                    </div>
                    <div className="col-start-2 flex items-center gap-px">
                      <button className="flex h-[26px] w-[94px] items-center justify-center gap-1.5 border-2 border-[#ababab] whitespace-nowrap text-[#444]">
                        <span>导入/导出<Key>P</Key></span>
                        <BigCaret />
                      </button>
                      <Info />
                    </div>
                  </div>
                </div>

                <div className="ml-[9px] flex w-8 flex-col gap-1 pt-[248px]">
                  <ScrollButton label="上移" rotate="rotate-180" className="h-[26px] w-8" />
                  <ScrollButton label="下移" className="h-[26px] w-8" />
                </div>
              </div>
            </div>
            <div className="mt-[13px] flex h-[17px] items-center bg-[#e5e5e5] px-0.5">
              <ScrollButton label="向左滚动" rotate="rotate-90" />
              <span className="h-[15px] flex-1 border border-[#ababab] bg-white" />
              <span className="w-[3px]" />
              <ScrollButton label="向右滚动" rotate="-rotate-90" />
            </div>
          </div>
        </div>
        <div className="flex items-start justify-end gap-[9px] pt-1 pb-2">
          <button className={`${push} w-[75px] border-2`}>确定</button>
          <button className={`${push} w-[75px] border`}>取消</button>
        </div>
      </div>
    </div>
  );
}

function Annotations() {
  return (
    <>
      <div className="pointer-events-none absolute top-[436px] left-[567px] h-[47px] w-[183px] border-7 border-[#fb3838]" />
      <svg viewBox="0 0 262 66" className="pointer-events-none absolute top-[478px] left-[294px] h-[66px] w-[262px]">
        <path d="M0 65.500 241 3l-3-3 24 1-18 16-1-4.500L1 66z" fill="#fb3838" />
      </svg>
    </>
  );
}

export default function App() {
  return (
    <div className="relative flex h-screen flex-col overflow-hidden border-r border-[#3b4a5a] bg-[#e6e6e6] font-['Noto_Sans','Noto_Sans_CJK_SC',sans-serif] text-[12px] leading-4">
      <TitleBar />
      <Ribbon />
      <FormulaBar />
      <Sheet />
      <SheetTabs />
      <StatusBar />
      <OptionsDialog />
      <Annotations />
    </div>
  );
}
